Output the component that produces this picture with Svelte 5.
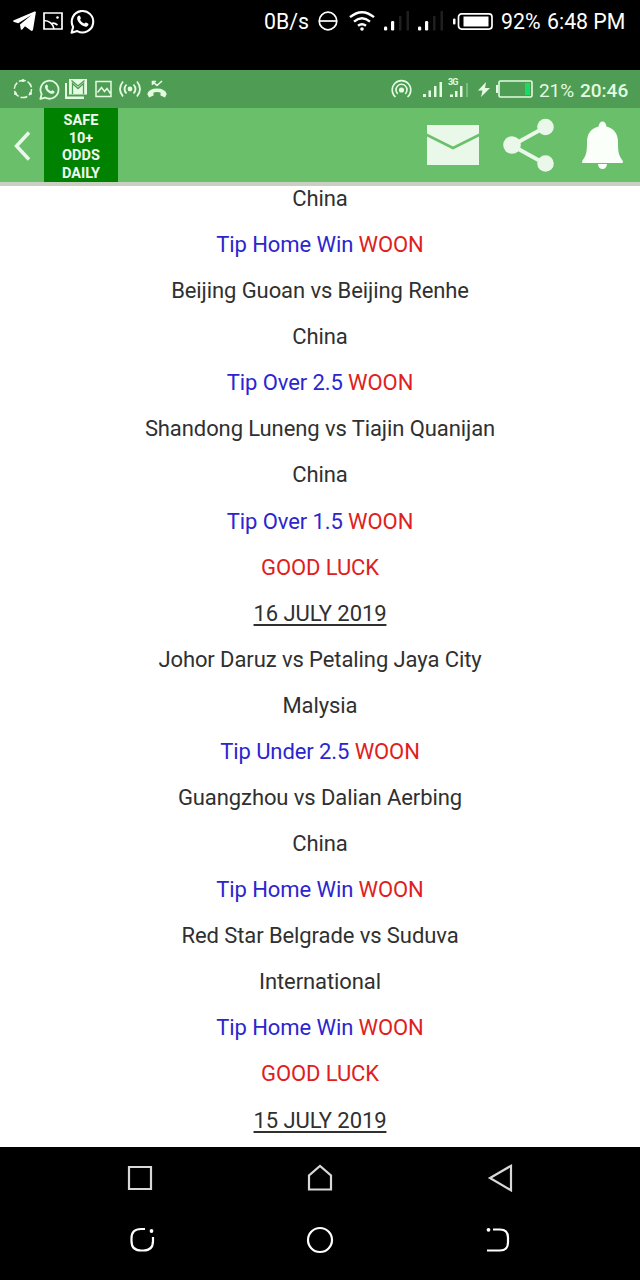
<script>
  const tips = [
    { text: "China" },
    { tip: "Tip Home Win" },
    { text: "Beijing Guoan vs Beijing Renhe" },
    { text: "China" },
    { tip: "Tip Over 2.5" },
    { text: "Shandong Luneng vs Tiajin Quanijan" },
    { text: "China" },
    { tip: "Tip Over 1.5" },
    { luck: "GOOD LUCK" },
    { date: "16 JULY 2019" },
    { text: "Johor Daruz vs Petaling Jaya City" },
    { text: "Malysia" },
    { tip: "Tip Under 2.5" },
    { text: "Guangzhou vs Dalian Aerbing" },
    { text: "China" },
    { tip: "Tip Home Win" },
    { text: "Red Star Belgrade vs Suduva" },
    { text: "International" },
    { tip: "Tip Home Win" },
    { luck: "GOOD LUCK" },
    { date: "15 JULY 2019" },
  ];
</script>

{#snippet whatsapp(size)}
  <svg width={size} height={size} viewBox="0 0 24 24">
    <path d="M1.5 22.8 3 17.2A10.3 10.3 0 1 1 7 21.2Z" fill="none" stroke="currentColor" stroke-width="2" stroke-linejoin="round" />
    <path d="M8.2 6.4c.6-.4 1.2-.2 1.4.4l.8 1.9c.2.5-.8 1.3-.7 1.7.8 1.7 2.1 2.9 3.8 3.6.5.2 1.2-1.4 1.8-1.1l2 1c1 .5.1 2.3-1 2.8-2 .9-4.7-.6-6.4-2.2-1.9-1.8-3.5-4.3-3-6.3.2-.8.6-1.3 1.3-1.8Z" />
  </svg>
{/snippet}

{#snippet bars()}
  <svg width="26" height="20" viewBox="0 0 26 20" class="bars">
    <rect x="0" y="15.5" width="3.2" height="4" rx="1.2" />
    <rect x="7" y="10" width="3.2" height="9.5" rx="1.2" />
    <rect x="15" y="5" width="2.5" height="14.5" opacity="0.12" />
    <rect x="22.5" y="0" width="2.5" height="19.5" opacity="0.12" />
  </svg>
{/snippet}

<main>
  <div class="phone-bar">
    <div class="left">
      <svg width="23" height="21" viewBox="0 0 23 21"><path d="M.3 9.5 21.5.5q1.6-.4 1.3 1.2L20 18.800q-.5 1.800-2.200.8L12 15.200l-3 3.600-1.200-.2-.8-5L18.500 4 5.200 12.200.3 10.700Z" /></svg>
      <svg width="20" height="18" viewBox="0 0 20 18" fill="none" stroke="currentColor" stroke-width="1.7">
        <path d="M1 1h18v16H1ZM1 8.500C6 8.500 10.500 12 11 17M9 11.500c2-1 3.500 0 5.500 1.500" />
        <circle cx="14.5" cy="5.5" r="1.3" fill="currentColor" stroke="none" />
      </svg>
      {@render whatsapp(25)}
    </div>
    <div class="right">
      <span class="speed">0B/s</span>
      <svg width="20" height="20" viewBox="0 0 20 20" fill="none" stroke="currentColor" stroke-width="1.7"><circle cx="10" cy="10" r="8.8" /><path d="M1 10h18" /></svg>
      <svg class="wifi" width="26" height="20" viewBox="0 0 26 20" fill="none" stroke="currentColor" stroke-width="2.4">
        <path d="M1 6.200Q13-3.800 25 6.200M5 10.600Q13 4 21 10.600M9 14.700q4-3 8 0" />
        <circle cx="13" cy="18" r="1.8" fill="currentColor" stroke="none" />
      </svg>
      {@render bars()}
      {@render bars()}
      <svg class="battery" width="40" height="17" viewBox="0 0 40 17">
        <rect x="0" y="5.5" width="2.5" height="6" rx="1" />
        <rect x="5.5" y=".9" width="33.5" height="15.2" rx="3" fill="none" stroke="currentColor" stroke-width="1.7" />
        <rect x="10.5" y="3.5" width="25" height="10" />
      </svg>
      <span class="pct">92%</span>
      <span class="clock">6:48 PM</span>
    </div>
  </div>

  <div class="app-bar">
    <div class="left">
      <svg width="20" height="22" viewBox="0 0 20 22">
        <circle cx="10" cy="11" r="8.6" fill="none" stroke="currentColor" stroke-width="1.5" stroke-dasharray="7 2" />
        <circle cx="10" cy="2.5" r="1.5" /><circle cx="2.5" cy="15.5" r="1.5" /><circle cx="17.5" cy="15.5" r="1.5" />
      </svg>
      {@render whatsapp(21)}
      <svg width="23" height="20" viewBox="0 0 23 20">
        <path d="M0 4h2v13.500h17V20H0Z" />
        <path d="M4 0h18v15.500H4Z" />
        <path d="M7.500 15V4.500l5.500 5 5.500-5V15M6.500 1.500 13 7l6.500-5.500" fill="none" stroke="#4f9d54" stroke-width="1.3" />
      </svg>
      <svg width="17" height="18" viewBox="0 0 17 18"><path d="M1 1.500h15v15H1Zm1.500 11 4-5 3 4 2.500-3 3.500 5" fill="none" stroke="currentColor" stroke-width="1.5" /></svg>
      <svg width="22" height="18" viewBox="0 0 22 18" fill="none" stroke="currentColor" stroke-width="1.8">
        <path d="M4 1.500q-6 7.500 0 15M18 1.500q6 7.500 0 15M7.500 4.500q-4 4.500 0 9M14.500 4.500q4 4.500 0 9" />
        <circle cx="11" cy="9" r="2.4" fill="currentColor" stroke="none" />
      </svg>
      <svg width="20" height="18" viewBox="0 0 20 18">
        <path d="m5.500 1.500 4.500 4 5-4.500M5.500 5V1.500H9" fill="none" stroke="currentColor" stroke-width="1.6" />
        <path d="M.3 14Q2 8.500 10 8.500T19.700 14L18 17.500 13.500 15.500v-3q-3.500-1-7 0v3L2 17.500Z" />
      </svg>
    </div>
    <div class="right">
      <svg width="21" height="20" viewBox="0 0 21 20" fill="none" stroke="currentColor" stroke-width="1.6">
        <path d="M4.500 18A9.300 9.300 0 1 1 16.500 18M6.700 14.800A5.500 5.500 0 1 1 14.300 14.800" />
        <circle cx="10.5" cy="11" r="1.8" fill="currentColor" />
      </svg>
      <svg class="sig" width="20" height="17" viewBox="0 0 20 17"><path d="M0 13h3v3H0ZM5.500 9.500h2.500v6.500H5.500ZM11 5h2.500v11H11ZM16.500 1H19v15h-2.500Z" /></svg>
      <div class="sig3g">
        <small>3G</small>
        <svg width="21" height="13" viewBox="0 0 21 13"><path d="M2 9.500h3V12H2ZM7 6h2.500v6H7ZM12 1h2.500v11H12Z" /><path d="M18-2h2v14h-2Z" opacity=".3" /></svg>
      </div>
      <svg width="12" height="15" viewBox="0 0 12 15"><path d="M8 0 0 8.500h4.500L3 15l9-9H7Z" /></svg>
      <svg class="cell" width="37" height="18" viewBox="0 0 37 18">
        <rect x="0" y="5" width="2" height="8" />
        <rect x="3" y="1" width="33" height="16" rx="1.5" fill="none" stroke="currentColor" stroke-width="1.6" />
        <rect class="charge" x="29" y="3" width="5" height="12" />
      </svg>
      <span class="pct">21%</span>
      <span class="clock">20:46</span>
    </div>
  </div>

  <header>
    <svg class="back" width="18" height="30" viewBox="0 0 18 30"><path d="M16 1.500 3.500 15 16 28.500" fill="none" stroke="currentColor" stroke-width="3.5" /></svg>
    <h1>SAFE<br />10+<br />ODDS<br />DAILY</h1>
    <nav>
      <svg width="52" height="40" viewBox="0 0 52 40"><path d="M0 0h52v8.500L26 21.500 0 8.500Z" /><path d="m0 11.500 26 13 26-13V40H0Z" /></svg>
      <svg width="52" height="54" viewBox="0 0 52 54">
        <path d="M42.500 9 9 27.500 42.500 46" fill="none" stroke="currentColor" stroke-width="4" />
        <circle cx="9" cy="27" r="8.8" /><circle cx="42.5" cy="9" r="8.3" /><circle cx="42.5" cy="45.5" r="8.3" />
      </svg>
      <svg class="bell" width="41" height="48" viewBox="0 0 41 48">
        <path d="M16.500 5.500Q17.500.5 20.500.5T24.500 5.500c8 2 11.500 8 11.500 15.500 0 10 .5 13 4.800 19v2H.2v-2C4.500 34 5 31 5 21 5 13.500 8.500 7.500 16.500 5.500Z" />
        <path d="M16 43h9q-.5 5-4.500 5T16 43Z" />
      </svg>
    </nav>
  </header>

  <section>
    {#each tips as row}
      {#if row.tip}
        <p class="tip">{row.tip} <em>WOON</em></p>
      {:else if row.luck}
        <p><em>{row.luck}</em></p>
      {:else if row.date}
        <p><u>{row.date}</u></p>
      {:else}
        <p>{row.text}</p>
      {/if}
    {/each}
  </section>

  <footer>
    <div class="keys inner">
      <svg width="28" height="28" viewBox="0 0 28 28"><path d="M3 3h22v22H3Z" /></svg>
      <svg width="28" height="28" viewBox="0 0 28 28"><path d="M3 25.500V11.500L14 2l11 9.500v14Z" /></svg>
      <svg width="28" height="28" viewBox="0 0 28 28"><path d="M25 1.800v24.500L4 14Z" /></svg>
    </div>
    <div class="keys outer">
      <svg width="28" height="28" viewBox="0 0 28 28">
        <path d="M19 3H15Q5.500 3 5.500 12.500v2.500q0 9.500 9.500 9.500h2.500q9.500 0 9.500-9.500V11" />
        <circle class="dot" cx="25.5" cy="5" r="1.9" />
      </svg>
      <svg width="28" height="28" viewBox="0 0 28 28"><circle cx="14" cy="14" r="12" /></svg>
      <svg width="28" height="28" viewBox="0 0 28 28">
        <path d="M7 3.500h7q8 0 8 8v5q0 8-8 8H1" />
        <circle class="dot" cx="2.5" cy="3.8" r="1.9" />
      </svg>
    </div>
  </footer>
</main>

<style>
  :global(body) {
    margin: 0;
    background: #000;
  }
  main {
    width: 640px;
    height: 1280px;
    display: flex;
    flex-direction: column;
    overflow: hidden;
    font-family: Roboto, sans-serif;
  }
  svg {
    fill: currentColor;
    flex: none;
    display: block;
    overflow: visible;
  }
  svg[fill="none"] {
    fill: none;
  }
  span {
    white-space: nowrap;
  }
  .left,
  .right {
    display: flex;
    align-items: center;
  }
  .phone-bar {
    height: 70px;
    box-sizing: border-box;
    padding: 0 15px 28px 13px;
    display: flex;
    justify-content: space-between;
    background: #000;
    color: #fff;
    font-size: 21.3px;
  }
  .phone-bar .left {
    gap: 7px;
  }
  .speed {
    width: 54px;
  }
  .wifi {
    margin: 0 9px 0 11px;
  }
  .bars + .bars {
    margin-left: 8px;
  }
  .battery {
    margin: 0 8px 0 9px;
  }
  .phone-bar .pct {
    width: 46px;
  }
  .phone-bar .clock {
    width: 78px;
  }
  .app-bar {
    height: 38px;
    box-sizing: border-box;
    padding: 2px 12px 0 13px;
    display: flex;
    justify-content: space-between;
    background: #4f9d54;
    color: #e3fbe0;
    font-size: 19px;
  }
  .app-bar .left {
    gap: 7px;
  }
  .app-bar .left svg {
    margin-top: -2px;
  }
  .app-bar .left svg:nth-child(2) {
    margin-left: -1px;
  }
  .app-bar .left svg:nth-child(3) {
    margin-left: -2px;
  }
  .app-bar .left svg:nth-child(6) {
    margin-left: -1px;
  }
  .app-bar .right svg {
    margin-top: -2px;
  }
  .sig {
    margin-left: 11px;
  }
  .sig3g {
    margin: -4px 9px 0 5px;
    width: 21px;
  }
  small {
    display: block;
    font-size: 9px;
    line-height: 9px;
    font-weight: 700;
    letter-spacing: -1px;
  }
  .cell {
    margin: 0 6px;
  }
  .charge {
    fill: #18dc63;
  }
  .app-bar .pct {
    width: 41px;
    letter-spacing: -0.1px;
  }
  .app-bar .clock {
    width: 48px;
    font-weight: 500;
  }
  header {
    height: 78px;
    box-sizing: border-box;
    display: flex;
    align-items: center;
    background: #6abf6b;
    border-bottom: 4px solid #c9cfc1;
    color: #e9f8e9;
  }
  .back {
    margin: 2px 13px 0;
  }
  h1 {
    width: 74px;
    height: 74px;
    margin: 0;
    padding-top: 4px;
    box-sizing: border-box;
    background: #008200;
    color: #eefbee;
    font-size: 14.5px;
    line-height: 17.5px;
    font-weight: 700;
    text-align: center;
  }
  nav {
    display: flex;
    align-items: center;
    gap: 24px;
    margin-left: auto;
    padding-right: 17px;
  }
  .bell {
    color: #fafffa;
    margin-left: 3px;
  }
  section {
    height: 961px;
    overflow: hidden;
    background: #fff;
    color: #303030;
    text-align: center;
    font-size: 22px;
    letter-spacing: -0.09px;
  }
  p {
    margin: 0;
    height: 46.08px;
    line-height: 26px;
  }
  .tip {
    color: #2c25cf;
  }
  em {
    font-style: normal;
    color: #e02020;
  }
  u {
    text-decoration-thickness: 1.5px;
    text-underline-offset: 3px;
  }
  footer {
    flex: 1;
    background: #000;
  }
  .keys {
    display: flex;
    justify-content: space-between;
    padding: 17px 126px 0;
  }
  .keys svg {
    fill: none;
    stroke: #d8d8d8;
    stroke-width: 2.2;
  }
  .outer {
    padding-top: 34px;
  }
  .outer svg {
    stroke: #fff;
  }
  .keys .dot {
    fill: #fff;
    stroke: none;
  }
</style>
